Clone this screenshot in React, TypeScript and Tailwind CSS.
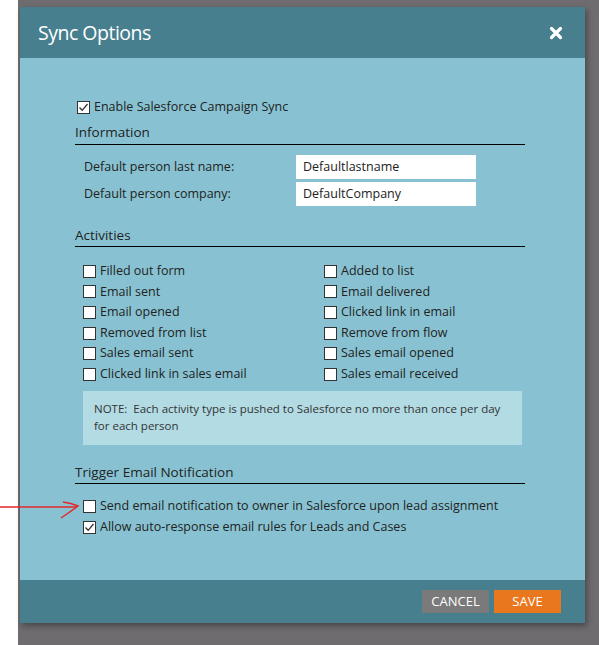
import React from 'react';

const font = { fontFamily: '"Open Sans", "Noto Sans", sans-serif' };

const Checkbox: React.FC<{ checked?: boolean }> = ({ checked }) => (
  <span className="w-[13px] h-[13px] bg-white border border-[#333] flex items-center justify-center shrink-0">
    {checked && (
      <svg width="11" height="11" viewBox="0 0 11 11">
        <path d="M1.5 5.5 L4.2 8.3 L9.5 2" fill="none" stroke="#333" strokeWidth="1.3" />
      </svg>
    )}
  </span>
);

const CheckRow: React.FC<{ label: string; checked?: boolean }> = ({ label, checked }) => (
  <div className="h-[20.6px] flex items-center gap-[4px] text-[12.5px] text-[#222]">
    <Checkbox checked={checked} />
    <span>{label}</span>
  </div>
);

const SectionHeading: React.FC<{ title: string; className?: string }> = ({ title, className }) => (
  <div className={`h-[25px] flex items-end border-b border-black text-[13.5px] leading-[20px] text-[#222] ${className ?? ''}`}>
    {title}
  </div>
);

const leftActivities = [
  'Filled out form',
  'Email sent',
  'Email opened',
  'Removed from list',
  'Sales email sent',
  'Clicked link in sales email',
];

const rightActivities = [
  'Added to list',
  'Email delivered',
  'Clicked link in email',
  'Remove from flow',
  'Sales email opened',
  'Sales email received',
];

export default function App() {
  return (
    <div className="h-[645px] w-[599px] flex overflow-hidden relative" style={font}>
      <div className="w-[18px] bg-white shrink-0" />
      <div className="flex-1 bg-[#6f6c6f] pt-[7px] pl-[2px]">
        <div className="w-[565px] flex flex-col shadow-[2px_3px_6px_rgba(0,0,0,0.35)]">
          {/* Header */}
          <div className="h-[51px] bg-[#477f8f] flex items-center justify-between pl-[18px] pr-[22px]">
            <span className="text-white text-[19.5px] tracking-[-0.5px] leading-none">Sync Options</span>
            <svg width="14" height="14" viewBox="0 0 14 14">
              <path d="M2.5 2.5 L11.5 11.5 M11.5 2.5 L2.5 11.5" stroke="white" strokeWidth="3.2" strokeLinecap="round" />
            </svg>
          </div>

          {/* Body */}
          <div className="h-[522px] bg-[#88c2d2] pl-[55px] pr-[60px] pt-[39px]">
            <div className="pl-[2px]">
              <div className="h-5 flex items-center gap-[4px] text-[12.5px] text-[#222]">
                <Checkbox checked />
                <span>Enable Salesforce Campaign Sync</span>
              </div>
            </div>

            <SectionHeading title="Information" className="mt-[3px] pb-[2px]" />
            <div className="mt-[10px] pl-[9px] flex flex-col gap-[3px] text-[12.5px] text-[#222]">
              <div className="h-[24px] flex items-center">
                <span className="w-[212px]">Default person last name:</span>
                <div className="w-[180px] h-[24px] bg-white flex items-center px-[7px]">Defaultlastname</div>
              </div>
              <div className="h-[24px] flex items-center">
                <span className="w-[212px]">Default person company:</span>
                <div className="w-[180px] h-[24px] bg-white flex items-center px-[7px]">DefaultCompany</div>
              </div>
            </div>

            <SectionHeading title="Activities" className="mt-[16px] pb-[1px]" />
            <div className="mt-[14px] pl-[8px] flex">
              <div className="w-[241px]">
                {leftActivities.map((a) => (
                  <CheckRow key={a} label={a} />
                ))}
              </div>
              <div>
                {rightActivities.map((a) => (
                  <CheckRow key={a} label={a} />
                ))}
              </div>
            </div>

            <div className="mt-[6px] ml-[8px] w-[439px] h-[54px] bg-[#b2dbe4] px-[11px] pt-[9px] text-[11.5px] leading-[17px] text-[#333]">
              NOTE:&nbsp; Each activity type is pushed to Salesforce no more than once per day for each person
            </div>

            <SectionHeading title="Trigger Email Notification" className="mt-[14px] pb-[1px]" />
            <div className="mt-[13px] pl-[8px]">
              <CheckRow label="Send email notification to owner in Salesforce upon lead assignment" />
              <CheckRow label="Allow auto-response email rules for Leads and Cases" checked />
            </div>
          </div>

          {/* Footer */}
          <div className="h-[43px] bg-[#477f8f] flex justify-end items-start pt-[10px] pr-[24px] gap-[5px]">
            <button className="w-[67px] h-[23px] bg-[#7a7a7a] text-white text-[13px] leading-none flex items-center justify-center">
              CANCEL
            </button>
            <button className="w-[67px] h-[23px] bg-[#e8771e] text-white text-[13px] leading-none flex items-center justify-center">
              SAVE
            </button>
          </div>
        </div>
      </div>

      {/* Red annotation arrow */}
      <svg className="absolute left-0 top-[496px]" width="90" height="30" viewBox="0 0 90 30">
        <path d="M0 11 L77 11" stroke="#e5262a" strokeWidth="1.4" fill="none" />
        <path d="M63 6 Q71 7 78 10 Q70 16 61 22" stroke="#e5262a" strokeWidth="1.4" fill="none" />
      </svg>
    </div>
  );
}
